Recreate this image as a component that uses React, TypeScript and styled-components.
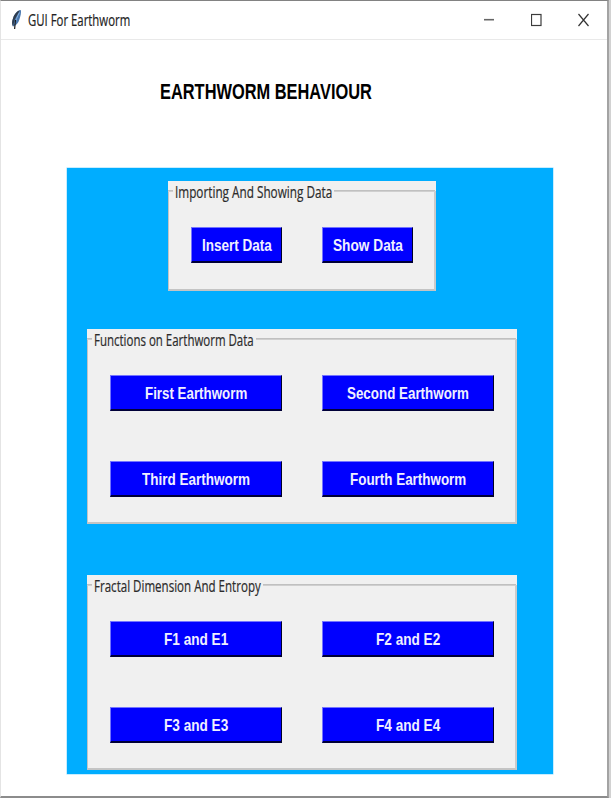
import React, { useLayoutEffect, useRef, useState } from "react";
import styled, { createGlobalStyle } from "styled-components";

const GlobalStyle = createGlobalStyle`
  html, body { margin: 0; padding: 0; background: #fff; }
  *, *::before, *::after { box-sizing: border-box; }
`;

const Shell = styled.div`
  width: 611px;
  height: 798px;
  padding-right: 2px;
  background: #d2d2d2;
  overflow: hidden;
`;

const Window = styled.div`
  width: 609px;
  height: 798px;
  display: flex;
  flex-direction: column;
  background: #fff;
  border-style: solid;
  border-width: 1px 2px 2px 1px;
  border-color: #828282 #a3a3a3 #8c8c8c #e4e4e4;
`;

const TitleBar = styled.header`
  height: 39px;
  flex: none;
  display: flex;
  align-items: center;
  padding-left: 9px;
  border-bottom: 1px solid #e9e9e9;
`;

const Caption = styled.div`
  height: 22px;
  margin: 0 auto 0 6px;
  font: 15.5px/22px "Open Sans", "Noto Sans", sans-serif;
  color: #222;
  -webkit-text-stroke: 0.2px #222;
`;

const Controls = styled.div`
  display: flex;
  gap: 35px;
  margin-right: 17px;
`;

const Heading = styled.h1`
  flex: none;
  height: 30px;
  margin: 37px 0 61px 159px;
  font: bold 21.5px/30px "Liberation Sans", Arial, sans-serif;
  color: #000;
`;

const Board = styled.main`
  flex: none;
  width: 486px;
  height: 606px;
  margin-left: 66px;
  padding-top: 13px;
  display: flex;
  flex-direction: column;
  align-items: flex-start;
  background: #00adff;
  box-shadow: 0 0 0 0.5px #8fdcff;
`;

const Group = styled.section<{ $compact?: boolean }>`
  flex: none;
  width: ${(p) => (p.$compact ? 268 : 430)}px;
  height: ${(p) => (p.$compact ? 110 : 195)}px;
  margin: 0 0 ${(p) => (p.$compact ? 38 : 51)}px ${(p) => (p.$compact ? 101 : 20)}px;
  background: #f0f0f0;
`;

const Legend = styled.div`
  height: 22px;
  display: flex;
  align-items: center;
  color: #2b2b2b;
  font: 15.5px/22px "Open Sans", "Noto Sans", sans-serif;
  -webkit-text-stroke: 0.2px #2b2b2b;

  &::before, &::after {
    content: "";
    height: 2px;
    margin-top: -2px;
    border-top: 1px solid #c0c0c0;
    border-bottom: 1px solid #cfcfcf;
  }
  &::before { width: 5px; margin-right: 2px; }
  &::after { flex: 1; margin-right: 1px; margin-left: 2px; }
`;

const GroupBody = styled.div<{ $compact?: boolean }>`
  height: calc(100% - 10px);
  margin-top: -12px;
  padding: 36px 0 0 22px;
  border-style: solid;
  border-width: 0 2px 2px 1px;
  border-color: #c4c4c4;
  border-right-color: #cbcbcb;
  display: grid;
  align-content: start;
  grid-template-columns: repeat(2, ${(p) => (p.$compact ? 91 : 172)}px);
  grid-auto-rows: 36px;
  gap: 50px 40px;
`;

const Button = styled.button`
  display: flex;
  align-items: center;
  justify-content: center;
  padding: 2px 0 0;
  background: #0000ff;
  color: #f0f0ff;
  border-style: solid;
  border-width: 1px 1px 2px 1px;
  border-color: #7474ff #000028 #000038 #7474ff;
  font: bold 17px/24px "Liberation Sans", Arial, sans-serif;
`;

const FitBox = styled.span<{ $width: number }>`
  display: block;
  width: ${(p) => p.$width}px;
  white-space: nowrap;
`;

const FitText = styled.span`
  display: inline-block;
  transform-origin: 0 50%;
`;

/* Condenses a line of text horizontally to the given width. */
function Fit({ width, children }: { width: number; children: string }) {
  const ref = useRef<HTMLSpanElement>(null);
  const [scale, setScale] = useState(1);
  useLayoutEffect(() => {
    if (ref.current) setScale(width / ref.current.offsetWidth);
  }, [width, children]);
  return (
    <FitBox $width={width}>
      <FitText ref={ref} style={{ transform: `scaleX(${scale})` }}>{children}</FitText>
    </FitBox>
  );
}

type GroupData = {
  title: string;
  width: number;
  compact?: boolean;
  buttons: [string, number][];
};

const groups: GroupData[] = [
  {
    title: "Importing And Showing Data",
    width: 157,
    compact: true,
    buttons: [["Insert Data", 70], ["Show Data", 70]],
  },
  {
    title: "Functions on Earthworm Data",
    width: 160,
    buttons: [
      ["First Earthworm", 102],
      ["Second Earthworm", 122],
      ["Third Earthworm", 108],
      ["Fourth Earthworm", 116],
    ],
  },
  {
    title: "Fractal Dimension And Entropy",
    width: 167,
    buttons: [["F1 and E1", 64], ["F2 and E2", 64], ["F3 and E3", 64], ["F4 and E4", 64]],
  },
];

function Feather() {
  return (
    <svg width="12" height="22" viewBox="0 0 12 22">
      <path d="M10.800 1C7.500 1.200 4.200 5 3 9.500C1.800 12.500 1.800 15 3 17.500C6 16.500 8.400 14 9.400 10.500C10.400 7 11.500 3.500 10.800 1Z" fill="#4a79b0" />
      <path d="M9.800 1.300C6.500 2.500 3.900 6 2.800 10C1.800 12.800 1.900 15.200 3 17.500L4.500 11Z" fill="#303c4c" />
      <path d="M9.500 3.500C7.500 7 5.500 11.500 5 15" fill="none" stroke="#86afdc" strokeWidth="1" />
      <path d="M5.500 11L4.600 20" stroke="#1a1a1a" strokeWidth="1.200" />
    </svg>
  );
}

export default function App() {
  return (
    <Shell>
      <GlobalStyle />
      <Window>
        <TitleBar>
          <Feather />
          <Caption><Fit width={102}>GUI For Earthworm</Fit></Caption>
          <Controls>
            <svg width="12" height="14" viewBox="0 0 12 14">
              <path d="M0 6.700H10" stroke="#666" strokeWidth="1.600" />
            </svg>
            <svg width="12" height="14" viewBox="0 0 12 14">
              <rect x="0.500" y="1.500" width="9.500" height="11" fill="none" stroke="#3c3c3c" strokeWidth="1.200" />
            </svg>
            <svg width="12" height="14" viewBox="0 0 12 14">
              <path d="M0.500 1L10.500 13M10.500 1L0.500 13" stroke="#333" strokeWidth="1.200" />
            </svg>
          </Controls>
        </TitleBar>
        <Heading><Fit width={212}>EARTHWORM BEHAVIOUR</Fit></Heading>
        <Board>
          {groups.map((g) => (
            <Group key={g.title} $compact={g.compact}>
              <Legend><Fit width={g.width}>{g.title}</Fit></Legend>
              <GroupBody $compact={g.compact}>
                {g.buttons.map(([label, width]) => (
                  <Button key={label}><Fit width={width}>{label}</Fit></Button>
                ))}
              </GroupBody>
            </Group>
          ))}
        </Board>
      </Window>
    </Shell>
  );
}
